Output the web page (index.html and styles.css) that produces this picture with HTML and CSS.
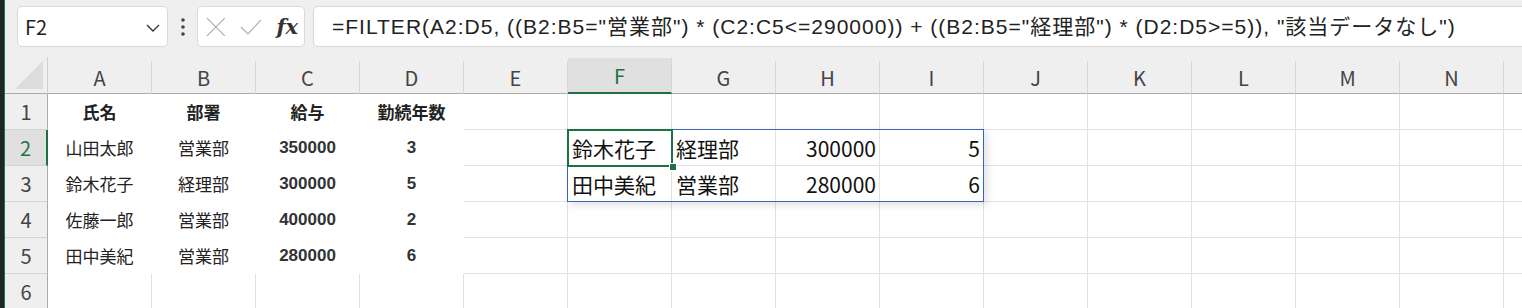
FILE: index.html
```html
<!DOCTYPE html>
<html lang="ja">
<head>
<meta charset="UTF-8">
<title>FILTER</title>
<link rel="stylesheet" href="styles.css">
</head>
<body>
<div class="frame">
  <div class="toolbar">
    <div class="namebox">
      <span>F2</span>
      <svg class="chev" width="14" height="8" viewBox="0 0 14 8"><path d="M1 1 L7 7 L13 1" fill="none" stroke="#333" stroke-width="1.4"/></svg>
    </div>
    <svg class="dots" width="6" height="20" viewBox="0 0 6 20"><circle cx="3" cy="3" r="1.8" fill="#444"/><circle cx="3" cy="10" r="1.8" fill="#444"/><circle cx="3" cy="17" r="1.8" fill="#444"/></svg>
    <div class="fxbox">
      <svg width="20" height="20" viewBox="0 0 20 20"><path d="M1 1 L19 19 M19 1 L1 19" stroke="#b0b0b0" stroke-width="1.3"/></svg>
      <svg width="22" height="20" viewBox="0 0 22 20"><path d="M1 10 L8 17 L21 3" fill="none" stroke="#b0b0b0" stroke-width="1.3"/></svg>
      <span class="fx">fx</span>
    </div>
    <div class="formula">=FILTER(A2:D5, ((B2:B5="営業部") * (C2:C5&lt;=290000)) + ((B2:B5="経理部") * (D2:D5&gt;=5)), "該当データなし")</div>
  </div>

  <div class="sheet">
    <div class="corner"><svg width="30" height="30" viewBox="0 0 30 30"><polygon points="29,1 29,29 1,29" fill="#dcdcdc"/></svg></div>
    <div class="colhead">A</div>
    <div class="colhead">B</div>
    <div class="colhead">C</div>
    <div class="colhead">D</div>
    <div class="colhead">E</div>
    <div class="colhead active">F</div>
    <div class="colhead">G</div>
    <div class="colhead">H</div>
    <div class="colhead">I</div>
    <div class="colhead">J</div>
    <div class="colhead">K</div>
    <div class="colhead">L</div>
    <div class="colhead">M</div>
    <div class="colhead">N</div>
    <div class="colhead"></div>

    <div class="rowhead">1</div>
    <div class="c plain th">氏名</div>
    <div class="c plain th">部署</div>
    <div class="c plain th">給与</div>
    <div class="c plain th">勤続年数</div>
    <div class="c"></div><div class="c"></div><div class="c"></div><div class="c"></div><div class="c"></div><div class="c"></div><div class="c"></div><div class="c"></div><div class="c"></div><div class="c"></div><div class="c"></div>

    <div class="rowhead active">2</div>
    <div class="c plain">山田太郎</div>
    <div class="c plain">営業部</div>
    <div class="c plain num">350000</div>
    <div class="c plain num">3</div>
    <div class="c"></div>
    <div class="c sp">鈴木花子</div>
    <div class="c sp">経理部</div>
    <div class="c sp right">300000</div>
    <div class="c sp right">5</div>
    <div class="c"></div><div class="c"></div><div class="c"></div><div class="c"></div><div class="c"></div><div class="c"></div>

    <div class="rowhead">3</div>
    <div class="c plain">鈴木花子</div>
    <div class="c plain">経理部</div>
    <div class="c plain num">300000</div>
    <div class="c plain num">5</div>
    <div class="c"></div>
    <div class="c sp">田中美紀</div>
    <div class="c sp">営業部</div>
    <div class="c sp right">280000</div>
    <div class="c sp right">6</div>
    <div class="c"></div><div class="c"></div><div class="c"></div><div class="c"></div><div class="c"></div><div class="c"></div>

    <div class="rowhead">4</div>
    <div class="c plain">佐藤一郎</div>
    <div class="c plain">営業部</div>
    <div class="c plain num">400000</div>
    <div class="c plain num">2</div>
    <div class="c"></div><div class="c"></div><div class="c"></div><div class="c"></div><div class="c"></div><div class="c"></div><div class="c"></div><div class="c"></div><div class="c"></div><div class="c"></div><div class="c"></div>

    <div class="rowhead">5</div>
    <div class="c plain">田中美紀</div>
    <div class="c plain">営業部</div>
    <div class="c plain num">280000</div>
    <div class="c plain num">6</div>
    <div class="c"></div><div class="c"></div><div class="c"></div><div class="c"></div><div class="c"></div><div class="c"></div><div class="c"></div><div class="c"></div><div class="c"></div><div class="c"></div><div class="c"></div>

    <div class="rowhead">6</div>
    <div class="c"></div><div class="c"></div><div class="c"></div><div class="c"></div><div class="c"></div><div class="c"></div><div class="c"></div><div class="c"></div><div class="c"></div><div class="c"></div><div class="c"></div><div class="c"></div><div class="c"></div><div class="c"></div><div class="c"></div>

    <div class="spill"></div>
    <div class="selected"></div>
    <div class="handle"></div>
  </div>
</div>
</body>
</html>
```

FILE: styles.css
```css
html, body {
  margin: 0;
  padding: 0;
  width: 1522px;
  height: 308px;
  overflow: hidden;
  background-color: #efefef;
}
.frame {
  height: 308px;
  border-left: 4px solid #1d2626;
  box-sizing: border-box;
}
.frame > * {
  border-left: 1px solid #1e7145;
}
.toolbar {
  height: 57px;
  box-sizing: border-box;
  padding: 6px 0 0 12px;
  display: flex;
  align-items: flex-start;
  white-space: nowrap;
}
.namebox {
  width: 151px;
  height: 41px;
  box-sizing: border-box;
  background-color: #fff;
  border: 1px solid #d9d9d9;
  border-radius: 5px;
  display: flex;
  align-items: center;
  justify-content: space-between;
  padding: 0 7px 0 7px;
  font-family: "Noto Sans CJK JP", sans-serif;
  font-size: 20px;
  color: #222;
}
.chev {
  margin-top: 2px;
}
.dots {
  margin: 11px 11px 0 12px;
}
.fxbox {
  width: 108px;
  height: 41px;
  box-sizing: border-box;
  background-color: #fff;
  border: 1px solid #d9d9d9;
  border-radius: 5px;
  display: flex;
  align-items: center;
  padding: 0 6px 0 8px;
  gap: 14px;
}
.fx {
  font-family: "DejaVu Serif", "Liberation Serif", serif;
  font-style: italic;
  font-weight: bold;
  font-size: 21px;
  color: #333;
  margin-left: 1px;
}
.formula {
  margin-left: 8px;
  flex: 1;
  height: 41px;
  box-sizing: border-box;
  background-color: #fff;
  border: 1px solid #d6d6d6;
  border-right: none;
  border-radius: 5px 0 0 5px;
  padding-left: 18px;
  line-height: 39px;
  font-family: "Liberation Sans", "Noto Sans CJK JP", sans-serif;
  font-size: 21px;
  letter-spacing: 1px;
  color: #222;
  overflow: hidden;
}

.sheet {
  position: relative;
  display: grid;
  grid-template-columns: 43px repeat(15, 104px);
  grid-template-rows: 37px repeat(6, 36px);
  font-family: "Noto Sans CJK JP", sans-serif;
}
.corner {
  background-color: #efefef;
  border-right: 1px solid #d0d0d0;
  border-bottom: 1px solid #ababab;
  display: flex;
  align-items: flex-end;
  justify-content: flex-end;
  padding: 0 3px 3px 0;
}
.colhead {
  align-self: end;
  height: 33px;
  box-sizing: border-box;
  background-color: #efefef;
  border-right: 1px solid #d6d6d6;
  border-bottom: 1px solid #ababab;
  display: flex;
  align-items: center;
  justify-content: center;
  font-size: 20px;
  color: #444;
}
.colhead.active {
  height: 36px;
  background-color: #e0e0e0;
  color: #1e7145;
  border-bottom: 2px solid #1e7145;
}
.rowhead {
  background-color: #efefef;
  border-right: 1px solid #ababab;
  border-bottom: 1px solid #d4d4d4;
  display: flex;
  align-items: center;
  justify-content: center;
  font-size: 20px;
  color: #444;
}
.rowhead.active {
  background-color: #e0e0e0;
  color: #1e7145;
  border-right: 2px solid #1e7145;
}
.c {
  background-color: #fff;
  border-right: 1px solid #e1e1e1;
  border-bottom: 1px solid #e1e1e1;
  display: flex;
  align-items: center;
  justify-content: center;
  font-size: 17px;
  color: #222;
  white-space: nowrap;
}
.c.plain {
  border-color: #fff;
}
.c.th {
  font-weight: bold;
}
.c.num {
  font-family: "Liberation Sans", Arial, sans-serif;
  font-weight: bold;
  font-size: 17px;
  color: #333;
}
.c.sp {
  justify-content: flex-start;
  padding-left: 4px;
  font-size: 21px;
  color: #111;
}
.c.sp.right {
  justify-content: flex-end;
  padding: 0 3px 0 0;
}
.spill {
  position: absolute;
  left: 562px;
  top: 72px;
  width: 417px;
  height: 73px;
  box-sizing: border-box;
  border: 1px solid #3a66b6;
  box-shadow: 3px 3px 8px rgba(0, 0, 0, 0.12);
}
.selected {
  position: absolute;
  left: 562px;
  top: 72px;
  width: 106px;
  height: 38px;
  box-sizing: border-box;
  border: 2px solid #1e7145;
}
.handle {
  position: absolute;
  left: 664px;
  top: 106px;
  width: 8px;
  height: 8px;
  box-sizing: border-box;
  background-color: #1e7145;
  border: 1px solid #fff;
}
```
